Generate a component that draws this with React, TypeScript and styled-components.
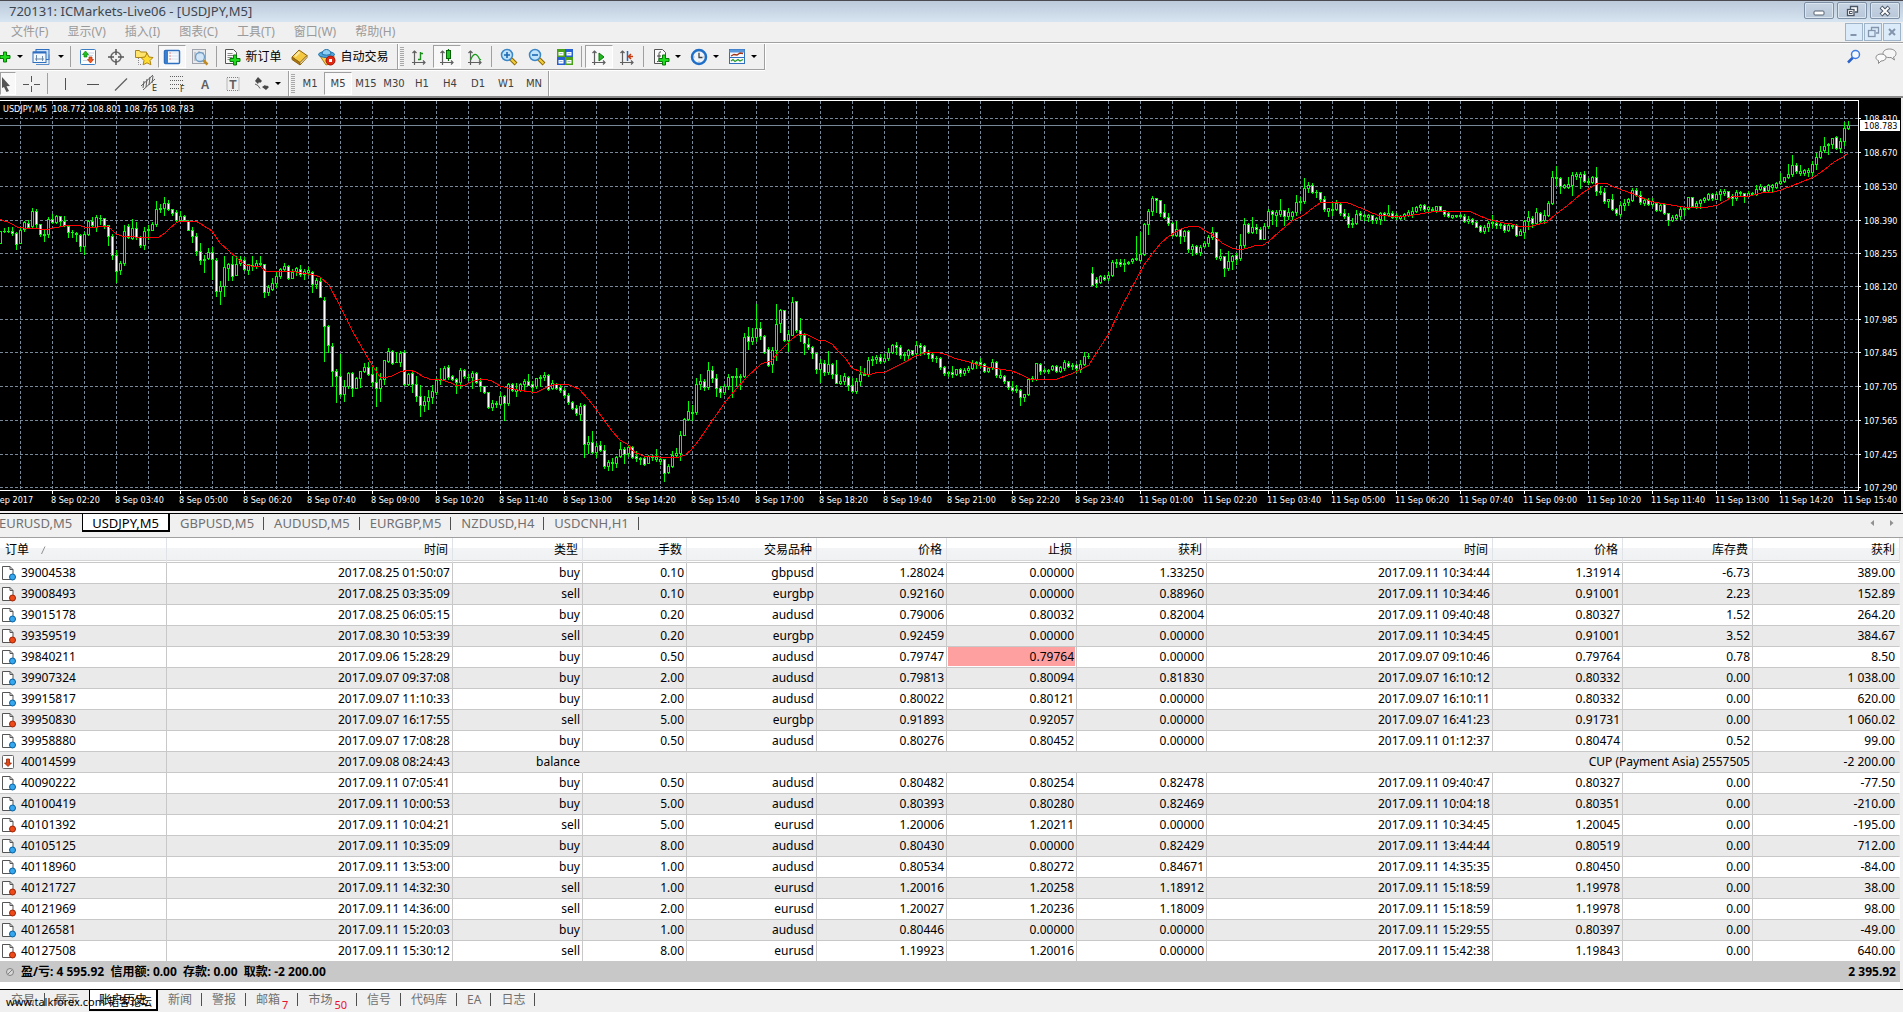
import React from "react";
import styled, { createGlobalStyle, css } from "styled-components";

/* ------------------------------------------------------------------ data */

// One candle per five minutes: high, body top, body bottom, low, measured
// downwards from the ceiling of the chart in thirds of a pixel.
// "+" closes above its open, "-" closes below it.
const CANDLES = `
408 409 445 445+ 400 408 410 412+ 397 408 410 412+ 397 409 415 420- 412 415 448 464- 400 405 446 446+ 380 381 404 408+ 376 384 396 399-
340 349 394 396+ 342 349 388 396- 388 388 419 424- 402 417 420 438- 366 373 419 426+ 357 374 382 384- 360 364 382 384+ 363 364 380 392-
364 380 391 394- 391 394 412 426- 405 411 413 426+ 411 415 419 438- 418 420 455 468- 412 418 455 479+ 376 379 417 421+ 366 379 390 396-
360 366 396 410+ 360 369 371 388+ 370 370 391 400- 391 391 425 450- 417 424 481 494- 467 481 529 562- 500 505 527 539+ 391 409 505 510+
388 395 427 430- 374 400 429 432+ 382 400 428 432- 425 427 452 458- 398 409 452 462+ 392 402 405 432+ 382 388 405 406+ 318 343 388 393+
327 340 344 352+ 306 325 340 360+ 316 325 343 345- 342 344 355 361- 347 352 376 382- 350 364 375 376+ 360 364 376 378- 376 378 406 406-
398 406 423 441- 414 424 469 482- 446 469 495 508- 482 492 496 533+ 460 472 490 494+ 457 472 493 552- 491 496 589 603- 558 574 589 629+
484 517 574 605+ 505 508 521 557+ 484 508 544 557- 484 508 541 541+ 484 493 506 512+ 487 496 523 526- 507 508 526 539+ 484 512 515 526+
496 506 514 520+ 484 506 508 514+ 508 509 592 607- 572 578 592 602+ 551 565 583 585+ 530 544 565 578+ 520 523 544 550+ 505 514 523 529+
512 514 551 553- 523 533 551 551+ 516 520 530 542+ 511 523 539 545- 523 529 538 553+ 517 526 533 541+ 529 533 569 591- 551 557 568 580+
548 558 607 608- 607 615 693 799- 690 693 751 771- 744 754 829 874- 822 829 845 923- 778 844 899 905- 856 874 898 920+ 832 835 875 881+
832 835 880 903- 846 850 880 881+ 828 829 849 876+ 804 816 829 832+ 801 816 838 840- 815 838 862 874- 816 862 880 935- 834 853 880 920+
795 797 852 868+ 759 769 799 802+ 766 768 806 808- 771 801 803 803+ 768 774 802 814+ 766 773 868 872- 834 837 868 870+ 832 835 868 892-
843 868 905 920- 870 904 932 965- 903 919 932 950+ 886 907 919 944+ 870 889 907 926+ 850 856 892 898+ 820 853 855 868+ 813 819 853 856+
810 817 846 852- 840 843 852 856- 850 852 862 896- 819 825 863 880+ 824 825 845 850- 837 846 848 856+ 829 835 847 880+ 832 836 862 866-
850 858 875 889- 873 875 892 895- 891 892 938 940- 915 925 937 947+ 920 925 928 938+ 892 904 927 930+ 900 904 924 977- 866 868 925 932+
864 868 885 889- 864 882 889 903+ 864 868 885 888+ 852 860 868 887+ 837 858 870 872- 860 868 877 892- 849 850 874 880+ 841 847 849 874+
831 841 847 856+ 837 840 883 885- 855 866 880 884+ 864 867 879 882- 868 878 886 892- 880 886 902 908- 896 902 922 928- 920 922 939 944-
930 940 956 962- 926 934 957 976+ 928 931 1048 1088- 1025 1042 1048 1075+ 1008 1042 1072 1076- 1044 1054 1073 1088+ 1040 1050 1066 1070- 1050 1066 1114 1120-
1096 1102 1114 1127+ 1090 1102 1105 1127+ 1084 1087 1105 1117+ 1042 1063 1084 1088+ 1056 1063 1077 1104- 1050 1057 1076 1084+ 1054 1056 1088 1089- 1070 1084 1090 1100-
1086 1090 1092 1107+ 1085 1090 1109 1112- 1080 1084 1105 1106+ 1082 1086 1088 1096+ 1062 1086 1093 1098+ 1088 1092 1098 1107+ 1092 1092 1136 1158- 1108 1114 1133 1134+
1070 1080 1114 1116+ 1060 1074 1081 1088+ 1008 1020 1075 1095+ 970 973 1021 1022+ 918 949 973 976+ 930 951 954 976+ 850 868 952 958+ 838 859 868 882+
852 858 877 885- 802 826 877 884+ 814 826 850 862- 838 850 880 903- 873 879 892 907- 868 874 892 899+ 837 847 874 882+ 843 844 847 906+
820 843 846 870+ 837 843 846 882+ 715 727 844 846+ 697 725 740 762- 700 726 740 747+ 628 700 728 740+ 682 700 724 734- 722 724 771 774-
758 763 810 814- 758 766 808 832+ 628 688 766 795+ 642 645 686 712+ 645 646 736 738- 706 718 736 768+ 607 622 720 722+ 618 619 706 712-
670 706 721 740- 716 721 745 779- 729 747 757 763- 754 757 775 790- 775 775 822 835- 793 804 823 862+ 795 804 832 841- 768 808 832 838+
806 808 838 850- 795 838 864 866- 840 858 865 868+ 834 843 859 868+ 844 847 870 886- 850 870 889 892- 850 858 890 894+ 813 838 858 872+
820 838 841 841+ 787 796 838 844+ 784 793 796 810+ 780 787 793 806+ 778 788 799 806- 778 791 800 803+ 760 772 791 796+ 748 751 771 776+
742 751 758 778- 750 757 781 790- 771 778 782 796+ 764 766 780 791+ 766 767 777 780- 740 751 776 780+ 744 750 756 781- 752 754 772 778-
766 772 778 790- 771 778 791 800- 783 789 791 802+ 787 790 816 822- 814 816 835 840- 828 832 836 844+ 813 832 838 846- 822 823 838 840+
820 823 836 844- 820 826 835 840+ 813 820 827 832+ 796 804 820 822+ 798 801 804 820+ 790 803 808 818- 805 807 829 832- 816 821 829 832+
793 802 817 822+ 798 801 841 846- 826 840 846 850+ 840 843 860 866- 858 860 877 882- 858 878 886 888- 870 883 886 892+ 884 886 908 932-
897 899 907 918+ 850 852 899 900+ 843 850 853 858+ 804 805 853 856+ 804 808 829 838- 820 826 829 832+ 823 827 829 836+ 810 814 823 826+
811 814 829 832- 815 818 829 832+ 795 802 819 825+ 798 804 814 816- 804 811 815 822+ 808 811 821 832- 796 808 822 832+ 772 784 808 810+
774 783 785 790+ 516 534 570 572- 546 552 564 578- 542 544 563 566+ 540 546 553 556- 532 541 551 555+ 496 502 542 544+ 494 502 505 516+
492 502 509 514- 492 505 508 528+ 498 502 505 508+ 490 493 499 504+ 424 490 493 496+ 412 478 496 498+ 385 388 478 480+ 342 349 388 418+
304 310 349 360+ 310 310 316 352- 316 316 355 364- 328 352 367 370- 354 367 385 390- 382 385 421 424- 378 403 421 424+ 402 404 424 444-
405 409 424 440+ 405 408 463 473- 448 454 463 482+ 450 454 474 478- 452 456 472 480+ 438 445 455 458+ 420 427 445 454+ 396 412 427 432+
411 412 486 492- 462 484 489 495+ 484 485 520 543- 468 499 520 526+ 480 484 498 522+ 476 481 492 508- 418 451 490 496+ 370 388 452 456+
384 388 412 416- 366 397 412 414+ 388 397 402 414- 396 402 433 434- 385 394 433 434+ 342 349 394 400+ 346 349 358 388- 346 352 360 393+
312 346 358 364+ 346 346 364 390- 340 352 364 374+ 349 351 364 375+ 300 322 351 360+ 306 318 322 345+ 250 280 320 326+ 262 271 280 291+
264 271 292 294- 286 291 293 306+ 291 292 313 318- 304 313 343 349- 340 341 348 364+ 325 342 346 361+ 315 326 342 346+ 322 328 355 360-
342 355 364 370- 354 364 387 396- 370 384 388 396+ 346 358 385 387+ 350 356 362 372- 357 361 364 376+ 357 360 366 378+ 360 361 376 384-
366 370 377 384+ 352 355 374 388+ 352 355 361 375- 330 354 360 364+ 348 355 367 369- 355 361 366 372+ 360 363 370 372+ 354 357 363 372+
346 352 360 364+ 336 348 358 366+ 333 336 350 352+ 327 331 338 346+ 328 331 342 348- 334 338 344 352+ 336 342 345 348+ 334 334 345 352+
333 334 346 350- 346 346 358 364- 349 354 364 366- 360 362 366 370+ 360 362 364 368+ 357 361 364 366+ 357 364 378 381- 364 372 378 384+
370 373 383 388- 378 382 396 398- 390 394 409 411- 390 397 410 416+ 380 384 397 408+ 360 381 384 398+ 378 384 390 400- 385 388 392 400+
386 390 406 411- 388 391 406 408+ 388 391 394 400+ 388 391 422 424- 402 409 420 422+ 376 378 411 430+ 348 367 378 402+ 364 369 384 396-
340 352 385 388+ 352 355 378 382- 346 360 375 384+ 318 325 360 364+ 228 246 325 328+ 213 246 250 270+ 246 250 274 294- 267 270 276 280+
246 267 276 279+ 232 240 270 302+ 231 238 244 252+ 231 237 246 279+ 228 238 260 262- 250 258 263 268+ 243 246 261 264+ 216 246 290 300-
274 288 292 298+ 279 292 319 326- 312 314 320 336+ 298 312 343 345- 340 343 355 361- 322 330 357 364+ 312 324 331 345+ 310 314 322 330+
279 286 316 318+ 280 285 301 304- 289 300 322 327- 309 316 324 331+ 310 316 328 332- 309 318 328 334+ 322 324 346 350- 327 330 346 348+
327 328 355 357- 354 354 376 392- 360 366 376 378+ 357 360 370 372+ 336 342 363 372+ 338 340 343 361+ 306 307 340 342+ 306 307 334 336-
318 324 334 340+ 312 316 325 340+ 306 310 316 322+ 294 298 312 315+ 294 298 310 315- 291 297 312 314+ 282 288 298 315+ 282 288 294 300+
288 288 306 308- 298 304 310 330- 285 292 310 315+ 288 291 296 300+ 294 295 304 321- 288 295 303 304+ 292 295 298 302+ 270 282 298 300+
267 274 284 286+ 273 276 288 292- 267 270 286 290+ 268 270 276 291+ 262 266 276 280+ 234 258 266 268+ 246 248 260 262+ 207 238 246 250+
180 211 238 243+ 204 210 229 234- 210 228 234 242+ 224 226 236 240+ 219 226 231 243+ 198 207 232 240+ 174 187 208 222+ 153 169 187 190+
126 154 167 171+ 146 148 152 178+ 129 130 149 160+ 124 127 161 162- 130 139 160 172+ 82 99 138 150+ 78 92 101 104+
`;

// Moving average, sampled in three stretches. Heights share the candle unit,
// distances run from the start of the stretch.
const AVERAGE_STEP = 2.45;
const AVERAGE = [
  {
    start: 0,
    points:
      "0,373 10,378 20,383 30,388 42,397 60,399 80,401 110,405 130,400 145,396 170,391 190,392 205,398 220,400 240,396 265,394 285,418 300,425 330,427 360,428 375,430 390,426 405,415 415,402 430,385 442,380 460,379 480,379 500,393 520,410 540,445 560,470 580,490 600,510 615,515 640,518 655,531 680,529 710,530 740,535 770,540 785,547 805,570 835,640 865,712 895,775 912,812 930,848 942,850 960,843 980,832 1003,826 1020,832 1035,845 1050,852 1070,854 1090,858 1105,865 1120,873 1140,871 1160,860 1187,853 1205,860 1225,873 1245,880 1270,885 1300,892 1315,891 1335,880 1355,872 1375,869 1395,872 1418,884 1440,912 1460,943 1480,975 1500,1010 1520,1035 1543,1055",
  },
  {
    start: 630,
    points:
      "0,1063 15,1076 35,1085 70,1087 100,1091 120,1088 135,1080 150,1066 170,1035 200,978 235,920 260,883 290,843 320,808 345,798 370,765 400,730 415,718 435,720 460,736 480,738 495,748 510,770 530,792 545,820 570,835 585,841 600,836 625,832 645,819 670,805 700,783 720,774 750,772 770,777 800,793 830,803 860,814 890,820 935,830 960,842 980,852 1000,852 1025,856 1045,852 1080,837 1100,826 1125,811 1140,780 1170,722 1200,645 1225,590 1240,556 1260,510 1280,478 1300,445 1320,423 1350,404 1375,394 1395,396 1410,408 1430,424 1450,445 1475,460 1495,465 1515,461 1530,453 1550,450",
  },
  {
    start: 1263,
    points:
      "0,450 13,442 40,412 70,380 100,360 125,337 140,326 200,322 215,327 245,343 280,361 330,367 350,363 385,358 425,349 490,349 510,353 550,372 590,384 610,387 625,394 660,394 695,382 715,362 745,335 780,297 800,280 820,266 840,265 860,277 895,292 935,312 955,321 1000,330 1030,336 1060,340 1090,338 1115,330 1150,308 1165,304 1190,303 1220,295 1250,292 1270,286 1300,270 1350,246 1375,227 1400,203 1420,187 1434,174",
  },
];

const PRICES: [string, number][] = [
  ["108.810", 20],
  ["108.670", 54],
  ["108.530", 88],
  ["108.390", 122],
  ["108.255", 155],
  ["108.120", 188],
  ["107.985", 221],
  ["107.845", 254],
  ["107.705", 288],
  ["107.565", 322],
  ["107.425", 356],
  ["107.290", 389],
];

const TIMES = [
  "8 Sep 2017", "8 Sep 02:20", "8 Sep 03:40", "8 Sep 05:00", "8 Sep 06:20", "8 Sep 07:40", "8 Sep 09:00",
  "8 Sep 10:20", "8 Sep 11:40", "8 Sep 13:00", "8 Sep 14:20", "8 Sep 15:40", "8 Sep 17:00", "8 Sep 18:20",
  "8 Sep 19:40", "8 Sep 21:00", "8 Sep 22:20", "8 Sep 23:40", "11 Sep 01:00", "11 Sep 02:20", "11 Sep 03:40",
  "11 Sep 05:00", "11 Sep 06:20", "11 Sep 07:40", "11 Sep 09:00", "11 Sep 10:20", "11 Sep 11:40",
  "11 Sep 13:00", "11 Sep 14:20", "11 Sep 15:40",
];

type Order = {
  id: string; opened: string; side: string; lots?: string; symbol?: string; open?: string;
  stop?: string; target?: string; closed?: string; close?: string; swap?: string; profit: string;
  stopHit?: boolean; note?: string;
};

const order = (line: string): Order => {
  const [id, opened, side, lots, symbol, open, stop, target, closed, close, swap, profit, hit] = line.split("|");
  return { id, opened, side, lots, symbol, open, stop, target, closed, close, swap, profit, stopHit: hit === "hit" };
};

const ORDERS: Order[] = [
  order("39004538|2017.08.25 01:50:07|buy|0.10|gbpusd|1.28024|0.00000|1.33250|2017.09.11 10:34:44|1.31914|-6.73|389.00"),
  order("39008493|2017.08.25 03:35:09|sell|0.10|eurgbp|0.92160|0.00000|0.88960|2017.09.11 10:34:46|0.91001|2.23|152.89"),
  order("39015178|2017.08.25 06:05:15|buy|0.20|audusd|0.79006|0.80032|0.82004|2017.09.11 09:40:48|0.80327|1.52|264.20"),
  order("39359519|2017.08.30 10:53:39|sell|0.20|eurgbp|0.92459|0.00000|0.00000|2017.09.11 10:34:45|0.91001|3.52|384.67"),
  order("39840211|2017.09.06 15:28:29|buy|0.50|audusd|0.79747|0.79764|0.00000|2017.09.07 09:10:46|0.79764|0.78|8.50|hit"),
  order("39907324|2017.09.07 09:37:08|buy|2.00|audusd|0.79813|0.80094|0.81830|2017.09.07 16:10:12|0.80332|0.00|1 038.00"),
  order("39915817|2017.09.07 11:10:33|buy|2.00|audusd|0.80022|0.80121|0.00000|2017.09.07 16:10:11|0.80332|0.00|620.00"),
  order("39950830|2017.09.07 16:17:55|sell|5.00|eurgbp|0.91893|0.92057|0.00000|2017.09.07 16:41:23|0.91731|0.00|1 060.02"),
  order("39958880|2017.09.07 17:08:28|buy|0.50|audusd|0.80276|0.80452|0.00000|2017.09.11 01:12:37|0.80474|0.52|99.00"),
  { id: "40014599", opened: "2017.09.08 08:24:43", side: "balance", note: "CUP (Payment Asia) 2557505", profit: "-2 200.00" },
  order("40090222|2017.09.11 07:05:41|buy|0.50|audusd|0.80482|0.80254|0.82478|2017.09.11 09:40:47|0.80327|0.00|-77.50"),
  order("40100419|2017.09.11 10:00:53|buy|5.00|audusd|0.80393|0.80280|0.82469|2017.09.11 10:04:18|0.80351|0.00|-210.00"),
  order("40101392|2017.09.11 10:04:21|sell|5.00|eurusd|1.20006|1.20211|0.00000|2017.09.11 10:34:45|1.20045|0.00|-195.00"),
  order("40105125|2017.09.11 10:35:09|buy|8.00|audusd|0.80430|0.00000|0.82429|2017.09.11 13:44:44|0.80519|0.00|712.00"),
  order("40118960|2017.09.11 13:53:00|buy|1.00|audusd|0.80534|0.80272|0.84671|2017.09.11 14:35:35|0.80450|0.00|-84.00"),
  order("40121727|2017.09.11 14:32:30|sell|1.00|eurusd|1.20016|1.20258|1.18912|2017.09.11 15:18:59|1.19978|0.00|38.00"),
  order("40121969|2017.09.11 14:36:00|sell|2.00|eurusd|1.20027|1.20236|1.18009|2017.09.11 15:18:59|1.19978|0.00|98.00"),
  order("40126581|2017.09.11 15:20:03|buy|1.00|audusd|0.80446|0.00000|0.00000|2017.09.11 15:29:55|0.80397|0.00|-49.00"),
  order("40127508|2017.09.11 15:30:12|sell|8.00|eurusd|1.19923|1.20016|0.00000|2017.09.11 15:42:38|1.19843|0.00|640.00"),
];

const COLUMNS: [string, number][] = [
  ["订单", 167], ["时间", 286], ["类型", 130], ["手数", 104], ["交易品种", 130], ["价格", 130],
  ["止损", 130], ["获利", 130], ["时间", 286], ["价格", 130], ["库存费", 130], ["获利", 147],
];

const MENUS = ["文件(F)", "显示(V)", "插入(I)", "图表(C)", "工具(T)", "窗口(W)", "帮助(H)"];
const FRAMES = ["M1", "M5", "M15", "M30", "H1", "H4", "D1", "W1", "MN"];
const CHART_TABS = ["EURUSD,M5", "USDJPY,M5", "GBPUSD,M5", "AUDUSD,M5", "EURGBP,M5", "NZDUSD,H4", "USDCNH,H1"];
const PANEL_TABS: [string, string?][] = [
  ["交易"], ["展示"], ["账户历史"], ["新闻"], ["警报"], ["邮箱", "7"], ["市场", "50"], ["信号"], ["代码库"], ["EA"], ["日志"],
];

/* ---------------------------------------------------------------- styles */

const ui = `"Noto Sans", "Noto Sans CJK SC", sans-serif`;

const Global = createGlobalStyle`
  * { box-sizing: border-box; }
  body { margin: 0; background: #f0f0f0; font: 12px/16px ${ui}; color: #000; overflow: hidden; }
  button { font: inherit; color: inherit; background: none; border: 0; padding: 0; margin: 0; }
  svg { display: block; flex: none; }
`;

const Window = styled.div`
  display: flex;
  flex-direction: column;
  min-height: 100vh;
  overflow: hidden;
`;

const TitleBar = styled.header`
  display: flex;
  align-items: center;
  justify-content: space-between;
  height: 22px;
  padding: 0 3px 2px 9px;
  border-top: 1px solid #4a4a50;
  background: linear-gradient(#bccada, #d7e4f1);
`;

const Title = styled.h1`
  margin: 0;
  font-size: 13px;
  line-height: 18px;
  font-weight: 400;
  color: #3c4650;
`;

const ButtonGroup = styled.div<{ $gap: number }>`
  display: flex;
  gap: ${(p) => p.$gap}px;
`;

const FrameButton = styled.button`
  display: grid;
  place-items: center;
  width: 30px;
  height: 17px;
  border: 1px solid #7d8fa5;
  border-radius: 2px;
  background: linear-gradient(#c6d3e2, #b9c8da);
  box-shadow: inset 0 0 0 1px #dbe5f0;
`;

const ChildButton = styled.button`
  display: grid;
  place-items: center;
  width: 18px;
  height: 18px;
  border: 1px solid #9fb4c9;
  background: #dcebfa;
`;

const MenuBar = styled.nav`
  display: flex;
  align-items: center;
  justify-content: space-between;
  height: 21px;
  padding: 0 2px 0 2px;
  border-bottom: 1px solid #a0a0a0;
`;

const MenuList = styled.div`
  display: flex;
  gap: 1px;
`;

const MenuItem = styled.button`
  padding: 0 9px;
  line-height: 20px;
  color: #9a9a9a;
`;

const Bars = styled.div`
  display: flex;
  justify-content: space-between;
  border-top: 1px solid #fff;
  border-bottom: 2px solid #8a8a8a;
`;

const BarRows = styled.div`
  display: flex;
  flex-direction: column;
`;

const BarRow = styled.div`
  display: flex;
  align-self: flex-start;
  height: 26px;

  &:first-child {
    border-bottom: 1px solid #a0a0a0;
    box-shadow: 0 1px 0 #fff;
  }

  &:last-child {
    padding-top: 1px;
  }
`;

const Bar = styled.div<{ $end?: number }>`
  display: flex;
  align-items: center;
  padding-right: ${(p) => p.$end ?? 4}px;
  border-right: 1px solid #a0a0a0;
  box-shadow: 1px 0 0 #fff;
`;

const Grip = styled.span`
  width: 4px;
  height: 20px;
  margin: 0 1px 0 2px;
  background: repeating-linear-gradient(#a8a8a8 0 1px, #f0f0f0 1px 2px);
`;

const Tool = styled.button<{ $w?: number; $on?: boolean }>`
  display: flex;
  align-items: center;
  justify-content: center;
  gap: 4px;
  width: ${(p) => p.$w ?? 28}px;
  height: 23px;
  white-space: nowrap;
  ${(p) =>
    p.$on &&
    css`
      border: 1px solid;
      border-color: #a0a0a0 #fff #fff #a0a0a0;
      background: #f8f8f8;
    `}
`;

const EdgeTool = styled(Tool)`
  justify-content: flex-end;
  padding-right: 1px;
`;

const Frame = styled(Tool)`
  font: 10px/14px "DejaVu Sans", sans-serif;
  color: #404040;
`;

const Rule = styled.span`
  width: 1px;
  height: 21px;
  margin: 0 3px 0 2px;
  background: #a0a0a0;
`;

const Caret = styled.span<{ $w?: number; $tight?: boolean }>`
  display: grid;
  align-items: center;
  justify-items: ${(p) => (p.$tight ? "start" : "center")};
  width: ${(p) => (p.$tight ? 10 : p.$w ?? 14)}px;

  &::after {
    content: "";
    border: 3px solid transparent;
    border-top-color: #000;
    border-bottom: 0;
  }
`;

const SideTools = styled.div`
  display: flex;
  align-items: center;
  gap: 14px;
  height: 24px;
  padding-right: 6px;
`;

const ChartPane = styled.section`
  display: flex;
  height: 414px;
  margin-right: 2px;
  background: #000;
  border-bottom: 1px solid #f4eef0;
  font: 9px/12px "DejaVu Sans Condensed", "Noto Sans", sans-serif;
`;

const Plot = styled.svg`
  flex: 1 1 0;
  min-width: 0;
  width: 0;
  height: 413px;
  overflow: visible;
  shape-rendering: crispEdges;
`;

const Scale = styled.svg`
  width: 43px;
  height: 413px;
  shape-rendering: crispEdges;
`;

const TabStrip = styled.div`
  display: flex;
  align-items: flex-start;
  justify-content: space-between;
  height: 22px;
  margin-top: 1px;
  border-top: 1px solid #000;
  overflow: hidden;
`;

const Tabs = styled.div`
  display: flex;
`;

const Tab = styled.button<{ $on?: boolean; $open?: boolean }>`
  position: relative;
  display: flex;
  height: 18px;
  padding: 0 10px;
  line-height: 19px;
  color: #707070;

  &::after {
    content: "";
    position: absolute;
    right: 0;
    top: 3px;
    width: 1px;
    height: 13px;
    background: ${(p) => (p.$on || p.$open ? "transparent" : "#505050")};
  }

  ${(p) =>
    p.$on &&
    css`
      background: #fff;
      color: #000;
      border: solid #000;
      border-width: 0 2px 2px 1px;
      padding: 0 9px;
    `}
`;

const ChartTab = styled(Tab)`
  font-size: 13px;

  &:first-child {
    margin-left: -11px;
  }
`;

const Count = styled.sub`
  font-size: 11px;
  line-height: 12px;
  align-self: flex-end;
  margin-left: 2px;
  color: #e8112d;
`;

const Scroller = styled.div`
  display: flex;
  gap: 14px;
  padding: 5px 9px 0 0;
`;

const Terminal = styled.section`
  display: flex;
  flex-direction: column;
  flex: 1;
  position: relative;
  margin-top: 2px;
  border-top: 1px solid #a0a0a0;
`;

const Report = styled.div`
  background: #fff;
  margin-right: 3px;
  padding-bottom: 7px;
`;

const Orders = styled.table`
  width: 100%;
  table-layout: fixed;
  border-collapse: separate;
  border-spacing: 0;
  text-align: right;
`;

const Head = styled.th<{ $left?: boolean }>`
  height: 25px;
  padding: ${(p) => (p.$left ? "0 0 0 5px" : "0 4px 0 0")};
  text-align: ${(p) => (p.$left ? "left" : "right")};
  font-weight: 400;
  border-right: 1px solid #dfe3e8;
  border-bottom: 1px solid #c8c8c8;
  background: linear-gradient(#fff 0 40%, #f3f4f6 41%, #eff1f3 22px, #d5d5d5 22px 23px, #fff 23px);
`;

const HeadLabel = styled.span`
  display: inline-flex;
  align-items: center;
  gap: 12px;
`;

const Cell = styled.td<{ $alert?: boolean; $last?: boolean; $open?: boolean }>`
  height: 21px;
  padding: 0 ${(p) => (p.$last ? 4 : 2)}px 0 0;
  line-height: 20px;
  border-right: 1px solid ${(p) => (p.$open ? "transparent" : "#c8c8c8")};
  border-bottom: 1px solid #c8c8c8;
  ${(p) => p.$alert && "background: #ffa0a0; box-shadow: inset 1px 0 0 #fff, inset -1px -1px 0 #fff;"}
`;

const Row = styled.tr`
  &:nth-child(even) {
    background: #eaeaea;
  }

  &:last-child ${Cell} {
    height: 20px;
    border-bottom: 0;
  }
`;

const Ticket = styled.div`
  display: flex;
  align-items: center;
  gap: 4px;
  padding-left: 2px;
`;

const Summary = styled.div`
  display: flex;
  align-items: center;
  gap: 7px;
  height: 21px;
  padding: 0 4px 0 6px;
  font-weight: 700;
  background: #c8c8c8;
`;

const Totals = styled.span`
  flex: 1;
  white-space: pre;
`;

const PanelStrip = styled(TabStrip)`
  flex: 1;
  margin-top: 0;
  height: auto;
`;

const PanelTabs = styled(Tabs)`
  padding-left: 1px;
`;

const PanelTab = styled(Tab)`
  height: 21px;
  line-height: 20px;
`;

const Watermark = styled.span`
  position: absolute;
  left: 6px;
  bottom: 2px;
  font-size: 11px;
  line-height: 16px;
`;

/* ----------------------------------------------------------------- icons */

const Svg = ({ w = 18, h = 18, children }: { w?: number; h?: number; children: React.ReactNode }) => (
  <svg width={w} height={h} viewBox={`0 0 ${w} ${h}`} fill="none" aria-hidden="true">
    {children}
  </svg>
);

const Plus = ({ x, y }: { x: number; y: number }) => (
  <path
    transform={`translate(${x} ${y})`}
    d="M4 0.500h3v3.500h3.500v3h-3.500v3.500h-3v-3.500h-3.500v-3h3.500z"
    fill="#1fdc1f"
    stroke="#067a06"
  />
);

const Sheet = () => <path d="M1.500 1.500h8l3 3v11h-11z" fill="#fafafa" stroke="#555" />;

const AxesIcon = ({ children }: { children: React.ReactNode }) => (
  <Svg>
    <path d="M4.500 3v14M2 14.500h13M2.500 5l2-2 2 2M13 12.500l2 2-2 2" stroke="#606060" strokeWidth="1.200" />
    {children}
  </Svg>
);

const Lens = ({ minus }: { minus?: boolean }) => (
  <Svg>
    <path d="M11 11l5 5" stroke="#8a6508" strokeWidth="4" />
    <path d="M11 11l4.500 4.500" stroke="#f2cf3a" strokeWidth="2.200" />
    <circle cx="7" cy="7" r="5.500" fill="#bfe3fb" stroke="#3d86c6" strokeWidth="1.500" />
    <path d={minus ? "M4 7h6" : "M4 7h6M7 4v6"} stroke="#1c68b0" strokeWidth="1.600" />
  </Svg>
);

const icons = {
  newChart: (
    <Svg w={12} h={14}>
      <Plus x={0.5} y={1.5} />
    </Svg>
  ),
  profiles: (
    <Svg>
      <rect x="4" y="1.500" width="13" height="10" fill="#cfe3f8" stroke="#2f6fc0" />
      <rect x="1" y="4" width="13" height="10.500" fill="#f2f8ff" stroke="#2f6fc0" />
      <path d="M1 4.500h13" stroke="#2f6fc0" strokeWidth="2" />
      <path d="M4.500 7v6M3 11h9M10.500 8v5" stroke="#6d89a8" />
      <path d="M4 16.500h13v-10" stroke="#5a8cc8" />
    </Svg>
  ),
  market: (
    <Svg>
      <rect x="1.500" y="1.500" width="15" height="15" rx="1" fill="#fbfdff" stroke="#3d7fc4" />
      <path d="M9 5h6M9 7.500h5M4 12.500h5" stroke="#c8d4e0" />
      <path d="M6.500 3l3 3.500h-1.500v2.500h-3v-2.500h-1.500z" fill="#1fc01f" stroke="#0b860b" strokeWidth=".7" />
      <path d="M11.500 15l3-3.500h-1.500v-2.500h-3v2.500h-1.500z" fill="#f4561c" stroke="#a8300a" strokeWidth=".7" />
    </Svg>
  ),
  crosshair: (
    <Svg>
      <circle cx="9" cy="9" r="5" stroke="#6a6a6a" strokeWidth="1.500" />
      <path d="M9 1v6M9 11v6M1 9h6M11 9h6" stroke="#555" strokeWidth="1.500" />
    </Svg>
  ),
  navigator: (
    <Svg w={20}>
      <path d="M1.500 9.500v-7h4l1 1.500h6v5.500z" fill="#ffe36a" stroke="#a8841a" />
      <path d="M4.500 10v6.500h3" stroke="#888" strokeDasharray="1 1" />
      <path d="M13 5l2 4 4 .500-3 3 .900 4.300-3.900-2-3.900 2 .900-4.300-3-3 4-.500z" fill="#ffdd33" stroke="#b08410" />
    </Svg>
  ),
  terminal: (
    <Svg>
      <rect x="1.500" y="2.500" width="15" height="13" rx="1" fill="#f6faff" stroke="#2f6fc0" strokeWidth="1.500" />
      <path d="M2 3h3v12.500H2z" fill="#3b7fd0" />
      <path d="M7 5h8M7 8h8M7 11h8" stroke="#d8e0ea" />
      <path d="M6.500 5h1M6.500 8h1M6.500 11h1" stroke="#d03030" />
    </Svg>
  ),
  tester: (
    <Svg>
      <rect x="1.500" y="1.500" width="13" height="14" fill="#e8eaee" stroke="#a0a4aa" />
      <path d="M4 4v9M8 3v4M12 4v3" stroke="#a0a4aa" />
      <path d="M12 12l4.500 4.500" stroke="#c08a20" strokeWidth="2.500" />
      <circle cx="9" cy="9" r="4.500" fill="#cfe6f8dd" stroke="#6f9cc4" strokeWidth="1.300" />
    </Svg>
  ),
  order: (
    <Svg w={17}>
      <Sheet />
      <path d="M3.500 5.500h5M3.500 7.500h6M3.500 9.500h5M3.500 11.500h3" stroke="#888" />
      <Plus x={5.5} y={6.5} />
    </Svg>
  ),
  editor: (
    <Svg>
      <path d="M1 9l7-7 8 5.500-7 7.500z" fill="#f5c842" stroke="#8f6410" />
      <path d="M1 9v2.500l8 5.500v-2.500z" fill="#a87412" stroke="#8f6410" />
      <path d="M9 17l7-7.500v-2l-7 7z" fill="#fff0c0" stroke="#8f6410" />
      <path d="M4 8.500l4.500-4.500" stroke="#ffe9a0" strokeWidth="2" />
    </Svg>
  ),
  expert: (
    <Svg>
      <path d="M2 8l6 9 7-2 1-7z" fill="#f7cf4a" stroke="#a87c14" />
      <ellipse cx="8.500" cy="6.500" rx="8" ry="3" fill="#4fa6dc" stroke="#1f6fa8" />
      <path d="M4 6c0-6 9-6 9 0-2 1.500-7 1.500-9 0z" fill="#8fd0f4" stroke="#1f6fa8" />
      <circle cx="12.500" cy="12.500" r="4.500" fill="#e02a14" stroke="#a01206" />
      <rect x="11" y="11" width="3" height="3" fill="#fff" />
    </Svg>
  ),
  bars: (
    <AxesIcon>
      <path d="M10.500 4v8M8 11.500h2.500M10.500 5.500H13" stroke="#1a8f1a" strokeWidth="1.400" />
    </AxesIcon>
  ),
  candles: (
    <AxesIcon>
      <path d="M10.500 1v12" stroke="#086008" strokeWidth="1.200" />
      <rect x="8.500" y="2.500" width="4" height="8" fill="#22c822" stroke="#086008" />
    </AxesIcon>
  ),
  line: (
    <AxesIcon>
      <path d="M4.500 12c2-5 5-9 9-1l1.500 1" stroke="#1a9a1a" strokeWidth="1.300" />
    </AxesIcon>
  ),
  tile: (
    <Svg>
      <path d="M1 1h8v8H1zM9 9h8v8H9z" fill="#4aa21a" />
      <path d="M9 1h8v8H9zM1 9h8v8H1z" fill="#2760d0" />
      <path d="M2.500 4h5v3.500h-5zM10.500 4h5v3.500h-5zM2.500 12h5v3.500h-5zM10.500 12h5v3.500h-5z" fill="#fff" />
      <path d="M3.500 5.500h3M11.500 5.500h3M3.500 13.500h3M11.500 13.500h3" stroke="#a8c0d8" />
    </Svg>
  ),
  scroll: (
    <AxesIcon>
      <path d="M9 5l5 4-5 4z" fill="#22b822" stroke="#0a7a0a" />
    </AxesIcon>
  ),
  shift: (
    <AxesIcon>
      <path d="M9.500 3v10" stroke="#1c6ab8" strokeWidth="1.500" />
      <path d="M15 8.500h-4M13 6l-2.500 2.500L13 11" stroke="#c83a10" strokeWidth="1.500" />
    </AxesIcon>
  ),
  indicators: (
    <Svg w={17}>
      <Sheet />
      <path d="M8 4c-2-.500-2 1-2 2v6c0 1-.500 2-2 1.500M4 8h4" stroke="#444" />
      <Plus x={5.5} y={6.5} />
    </Svg>
  ),
  periods: (
    <Svg>
      <circle cx="9" cy="9" r="7" fill="#eef4fa" stroke="#1f6fc8" strokeWidth="2.500" />
      <path d="M9 5v4.500h3.500" stroke="#444" strokeWidth="1.300" />
      <path d="M9 3.500v1M9 13.500v1M3.500 9h1M13.500 9h1" stroke="#888" />
    </Svg>
  ),
  templates: (
    <Svg>
      <rect x="1.500" y="1.500" width="15" height="14" fill="#f6faff" stroke="#2f6fc0" />
      <path d="M1.500 3h15" stroke="#5a98dc" strokeWidth="3" />
      <path d="M1.500 9.500h15" stroke="#2f6fc0" />
      <path d="M3 8l3-1.500 3 .500 3-2 3 .500" stroke="#a03414" strokeWidth="1.300" />
      <path d="M3 13l2-1.500 2 2 3-2 2 1.500 3-1.500" stroke="#2a9a2a" strokeWidth="1.300" />
    </Svg>
  ),
  pointer: (
    <Svg w={12}>
      <path d="M0 2l8 9-3.500.200 2.500 4.800-2.500 1-2.500-5L0 13z" fill="#555" />
    </Svg>
  ),
  cross: (
    <Svg>
      <path d="M9.500 1v6M9.500 11v6M1 9.500h6M12 9.500h6" stroke="#555" />
    </Svg>
  ),
  vertical: (
    <Svg>
      <path d="M9.500 3v12" stroke="#505050" />
    </Svg>
  ),
  horizontal: (
    <Svg>
      <path d="M3 9.500h12" stroke="#505050" />
    </Svg>
  ),
  trend: (
    <Svg>
      <path d="M3 15.500L15 3.500" stroke="#606060" strokeWidth="1.200" />
    </Svg>
  ),
  channel: (
    <Svg h={20}>
      <path d="M1 12L13 1M3 16L15 5M4 7l-1 7M7 5l-1 8M10 3l-1 8M13 2l-1 7" stroke="#606060" />
      <text x="12" y="17" fontFamily="DejaVu Sans" fontSize="8" fill="#303030">E</text>
    </Svg>
  ),
  fibo: (
    <Svg h={20}>
      <path d="M2 2.500h14M2 6.500h14M2 10.500h14M2 14.500h9" stroke="#606060" strokeDasharray="1 1" />
      <text x="12" y="18" fontFamily="DejaVu Sans" fontSize="8" fill="#303030">F</text>
    </Svg>
  ),
  text: (
    <Svg>
      <text x="9" y="14" textAnchor="middle" fontFamily="Liberation Sans" fontWeight="700" fontSize="12" fill="#606060">A</text>
    </Svg>
  ),
  label: (
    <Svg>
      <rect x="3" y="2.500" width="12" height="13" stroke="#808080" strokeDasharray="1 1" />
      <text x="9" y="13.500" textAnchor="middle" fontFamily="Liberation Sans" fontWeight="700" fontSize="12" fill="#606060">T</text>
    </Svg>
  ),
  arrows: (
    <Svg>
      <path d="M6 2l4 4-2 2-1-1-1 2-3-3zM10 12l4 3 3-3-2-1.500-1 .500-1-1z" fill="#484848" />
      <path d="M3 9l3 1.500 2 3" stroke="#606060" />
    </Svg>
  ),
  search: (
    <Svg w={15} h={15}>
      <path d="M7 8.500L2 13.500" stroke="#2b62c8" strokeWidth="2.500" />
      <circle cx="9.500" cy="5.500" r="4" fill="#f4f8ff" stroke="#3f7be0" strokeWidth="1.500" />
    </Svg>
  ),
  chat: (
    <Svg w={22} h={16}>
      <path d="M14.500 1c4 0 6.500 2 6.500 4.500 0 2-1 3-2.500 3.500l1 3-3.500-2.500c-5 .500-8-1.500-8-4s2.500-4.500 6.500-4.500z" fill="#f6f6f6" stroke="#8c8c8c" />
      <path d="M6 6c3 0 5 1.500 5 3.500s-2 3.500-5 3.500l-2.500 2.500V12.500C1.800 12 1 11 1 9.500 1 7.500 3 6 6 6z" fill="#fafafa" stroke="#8c8c8c" />
    </Svg>
  ),
};

const GlyphMin = ({ pale }: { pale?: boolean }) => (
  <Svg w={14} h={12}>
    {pale ? <path d="M3.500 9h6" stroke="#8295ad" strokeWidth="2" /> : <rect x="2" y="6" width="10" height="4" rx="1" fill="#fff" stroke="#566070" />}
  </Svg>
);

const GlyphRestore = ({ pale }: { pale?: boolean }) => (
  <Svg w={14} h={12}>
    <path d="M5.500 4V1.500h7v5.500H10" fill={pale ? "none" : "#fff"} stroke={pale ? "#8295ad" : "#4a5464"} strokeWidth="1.300" />
    <rect x="2.500" y="4.500" width="6.500" height="6" fill={pale ? "none" : "#fff"} stroke={pale ? "#8295ad" : "#4a5464"} strokeWidth="1.300" />
    {!pale && <rect x="4.500" y="6.500" width="2.500" height="2" stroke="#4a5464" />}
  </Svg>
);

const GlyphClose = ({ pale }: { pale?: boolean }) => (
  <Svg w={14} h={12}>
    {!pale && <path d="M3 2l8 8M11 2l-8 8" stroke="#4a5464" strokeWidth="4" />}
    <path d={pale ? "M4 3l6 6M10 3l-6 6" : "M3.500 2.500l7 7M10.500 2.500l-7 7"} stroke={pale ? "#8295ad" : "#fff"} strokeWidth="2" />
  </Svg>
);

const TicketIcon = ({ side }: { side: string }) =>
  side === "balance" ? (
    <Svg w={15} h={16}>
      <rect x="0.500" y="1.500" width="11" height="13" rx="1" fill="#fff" stroke="#666" />
      <path d="M6 12.500l3.500-3.500H7.500V5h-3v4h-2z" fill="#e04818" stroke="#8c2408" strokeWidth=".8" />
    </Svg>
  ) : (
    <Svg w={15} h={16}>
      <path d="M0.500 1.500h7.500l3 3v10h-10.500z" fill="#fff" stroke="#555" />
      <path d="M8 1.500v3h3" stroke="#555" />
      <circle cx="10.500" cy="12" r="3" fill={side === "buy" ? "#35a8f0" : "#f04a18"} stroke={side === "buy" ? "#0d5f9c" : "#98260a"} />
    </Svg>
  );

/* ----------------------------------------------------------------- chart */

const PLOT_TOP = 3;
const toY = (value: number) => Math.floor(value / 3) - PLOT_TOP;

const candles = Array.from(CANDLES.matchAll(/(\d+) (\d+) (\d+) (\d+)([+-])/g)).map((m) => ({
  high: toY(+m[1]),
  top: toY(+m[2]),
  bottom: toY(+m[3]),
  low: toY(+m[4]),
  up: m[5] === "+",
}));

const average = AVERAGE.flatMap(({ start, points }) =>
  points.split(" ").map((pair) => {
    const [x, y] = pair.split(",").map(Number);
    return `${Math.round(start + x / AVERAGE_STEP)},${toY(y)}`;
  })
).join(" ");

const Candle = ({ index, candle: c }: { index: number; candle: (typeof candles)[number] }) => {
  const x = index * 4;
  const height = c.bottom - c.top;
  return (
    <g>
      <rect x={x} y={c.high} width="1" height={c.low - c.high + 1} fill="#0f0" />
      <rect x={x - 1} y={c.top} width="3" height={height + 1} fill="#0f0" />
      {height > 1 && <rect x={x} y={c.top + 1} width="1" height={height - 1} fill={c.up ? "#000" : "#fff"} />}
    </g>
  );
};

const Chart = () => (
  <ChartPane aria-label="USDJPY,M5">
    <Plot>
      <g stroke="#778899" strokeDasharray="3 2">
        {Array.from({ length: 58 }, (_, i) => (
          <line key={i} x1={20.5 + i * 32} x2={20.5 + i * 32} y1="3" y2="392" />
        ))}
        {PRICES.map(([label, y]) => (
          <line key={label} x1="0" x2="100%" y1={y + 0.5} y2={y + 0.5} />
        ))}
      </g>
      <line x1="0" x2="100%" y1="27.500" y2="27.500" stroke="#778899" />
      {candles.map((c, i) => (
        <Candle key={i} index={i} candle={c} />
      ))}
      <polyline points={average} fill="none" stroke="#f00" />
      <line x1="0" x2="100%" y1="2.500" y2="2.500" stroke="#fff" />
      <line x1="0" x2="100%" y1="392.500" y2="392.500" stroke="#fff" />
      <text x="3" y="14" fill="#fff">USDJPY,M5&#160; 108.772 108.801 108.765 108.783</text>
      {TIMES.map((label, i) => (
        <g key={label}>
          <rect x={i * 64 - 12} y="393" width="1" height="3" fill="#fff" />
          <text x={i * 64 - 13} y="405" fill="#fff">{label}</text>
        </g>
      ))}
    </Plot>
    <Scale>
      <line x1="0.500" x2="0.500" y1="2" y2="393" stroke="#fff" />
      {PRICES.map(([label, y]) => (
        <g key={label}>
          <rect x="1" y={y} width="2" height="1" fill="#fff" />
          <text x="6" y={y + 4} fill="#fff">{label}</text>
        </g>
      ))}
      <rect x="2" y="22" width="40" height="11" fill="#fff" />
      <text x="6" y="31" fill="#000">108.783</text>
    </Scale>
  </ChartPane>
);

/* ------------------------------------------------------------------- app */

const OrderRow = ({ item }: { item: Order }) => (
  <Row>
    <Cell>
      <Ticket>
        <TicketIcon side={item.side} />
        {item.id}
      </Ticket>
    </Cell>
    <Cell>{item.opened}</Cell>
    <Cell $open={!!item.note}>{item.side}</Cell>
    {item.note ? (
      <Cell colSpan={8}>{item.note}</Cell>
    ) : (
      <>
        <Cell>{item.lots}</Cell>
        <Cell>{item.symbol}</Cell>
        <Cell>{item.open}</Cell>
        <Cell $alert={item.stopHit}>{item.stop}</Cell>
        <Cell>{item.target}</Cell>
        <Cell>{item.closed}</Cell>
        <Cell>{item.close}</Cell>
        <Cell>{item.swap}</Cell>
      </>
    )}
    <Cell $last $open>{item.profit}</Cell>
  </Row>
);

export default function App() {
  return (
    <Window>
      <Global />
      <TitleBar>
        <Title>720131: ICMarkets-Live06 - [USDJPY,M5]</Title>
        <ButtonGroup $gap={3}>
          <FrameButton aria-label="最小化"><GlyphMin /></FrameButton>
          <FrameButton aria-label="还原"><GlyphRestore /></FrameButton>
          <FrameButton aria-label="关闭"><GlyphClose /></FrameButton>
        </ButtonGroup>
      </TitleBar>
      <MenuBar>
        <MenuList>
          {MENUS.map((m) => (
            <MenuItem key={m}>{m}</MenuItem>
          ))}
        </MenuList>
        <ButtonGroup $gap={1}>
          <ChildButton aria-label="最小化图表"><GlyphMin pale /></ChildButton>
          <ChildButton aria-label="还原图表"><GlyphRestore pale /></ChildButton>
          <ChildButton aria-label="关闭图表"><GlyphClose pale /></ChildButton>
        </ButtonGroup>
      </MenuBar>

      <Bars>
        <BarRows>
          <BarRow>
            <Bar>
              <EdgeTool $w={12} aria-label="新图表">{icons.newChart}</EdgeTool>
              <Caret $w={16} />
              <Tool $w={26} aria-label="配置文件">{icons.profiles}</Tool>
              <Caret />
              <Rule />
              <Tool aria-label="市场报价">{icons.market}</Tool>
              <Tool aria-label="数据窗口">{icons.crosshair}</Tool>
              <Tool aria-label="导航">{icons.navigator}</Tool>
              <Tool $on aria-label="终端">{icons.terminal}</Tool>
              <Tool aria-label="策略测试">{icons.tester}</Tool>
              <Rule />
              <Tool $w={66}>{icons.order}新订单</Tool>
              <Tool aria-label="MetaEditor">{icons.editor}</Tool>
              <Tool $w={79}>{icons.expert}自动交易</Tool>
            </Bar>
            <Bar $end={3}>
              <Grip />
              <Tool aria-label="柱状图">{icons.bars}</Tool>
              <Tool $on aria-label="阴阳烛">{icons.candles}</Tool>
              <Tool aria-label="折线图">{icons.line}</Tool>
              <Rule />
              <Tool aria-label="放大"><Lens /></Tool>
              <Tool aria-label="缩小"><Lens minus /></Tool>
              <Tool aria-label="平铺">{icons.tile}</Tool>
              <Rule />
              <Tool $on aria-label="自动滚动">{icons.scroll}</Tool>
              <Tool aria-label="图表平移">{icons.shift}</Tool>
              <Rule />
              <Tool aria-label="技术指标">{icons.indicators}</Tool>
              <Caret $tight />
              <Tool aria-label="时间周期">{icons.periods}</Tool>
              <Caret $tight />
              <Tool aria-label="模板">{icons.templates}</Tool>
              <Caret $tight />
            </Bar>
          </BarRow>
          <BarRow>
            <Bar $end={3}>
              <Tool $w={16} $on aria-label="光标">{icons.pointer}</Tool>
              <Tool $w={29} aria-label="十字准线">{icons.cross}</Tool>
              <Rule />
              <Tool aria-label="垂直线">{icons.vertical}</Tool>
              <Tool aria-label="水平线">{icons.horizontal}</Tool>
              <Tool aria-label="趋势线">{icons.trend}</Tool>
              <Tool aria-label="等距通道">{icons.channel}</Tool>
              <Tool aria-label="斐波那契">{icons.fibo}</Tool>
              <Tool aria-label="文字">{icons.text}</Tool>
              <Tool aria-label="文字标签">{icons.label}</Tool>
              <Tool aria-label="箭头">{icons.arrows}</Tool>
              <Caret $tight />
            </Bar>
            <Bar $end={0}>
              <Grip />
              {FRAMES.map((f) => (
                <Frame key={f} $on={f === "M5"}>{f}</Frame>
              ))}
            </Bar>
          </BarRow>
        </BarRows>
        <SideTools>
          <Tool $w={15} aria-label="搜索">{icons.search}</Tool>
          <Tool $w={22} aria-label="聊天">{icons.chat}</Tool>
        </SideTools>
      </Bars>

      <Chart />

      <TabStrip>
        <Tabs>
          {CHART_TABS.map((t, i) => (
            <ChartTab key={t} $on={i === 1} $open={i === 0}>{t}</ChartTab>
          ))}
        </Tabs>
        <Scroller>
          <Svg w={5} h={8}><path d="M4 1v6L0.500 4z" fill="#909090" /></Svg>
          <Svg w={5} h={8}><path d="M1 1v6l3.500-3z" fill="#909090" /></Svg>
        </Scroller>
      </TabStrip>

      <Terminal>
        <Report>
          <Orders>
            <colgroup>
              {COLUMNS.map(([, width], i) => (
                <col key={i} width={width} />
              ))}
            </colgroup>
            <thead>
              <tr>
                {COLUMNS.map(([label], i) => (
                  <Head key={i} $left={i === 0} scope="col">
                    {i === 0 ? (
                      <HeadLabel>
                        {label}
                        <Svg w={7} h={8}><path d="M0.500 8L4 0.500" stroke="#909090" /></Svg>
                      </HeadLabel>
                    ) : (
                      label
                    )}
                  </Head>
                ))}
              </tr>
            </thead>
            <tbody>
              {ORDERS.map((o) => (
                <OrderRow key={o.id} item={o} />
              ))}
            </tbody>
          </Orders>
          <Summary>
            <Svg w={8} h={8}>
              <circle cx="4" cy="4" r="3.500" fill="#d8d8d8" stroke="#808080" />
              <path d="M2 6l4-4" stroke="#808080" />
            </Svg>
            <Totals>{"盈/亏: 4 595.92  信用额: 0.00  存款: 0.00  取款: -2 200.00"}</Totals>
            <span>2 395.92</span>
          </Summary>
        </Report>
        <PanelStrip>
          <PanelTabs>
            {PANEL_TABS.map(([label, count], i) => (
              <PanelTab key={label} $on={i === 2} $open={i === 1}>
                {label}
                {count && <Count>{count}</Count>}
              </PanelTab>
            ))}
          </PanelTabs>
        </PanelStrip>
        <Watermark>www.talkforex.com 韬客论坛</Watermark>
      </Terminal>
    </Window>
  );
}
